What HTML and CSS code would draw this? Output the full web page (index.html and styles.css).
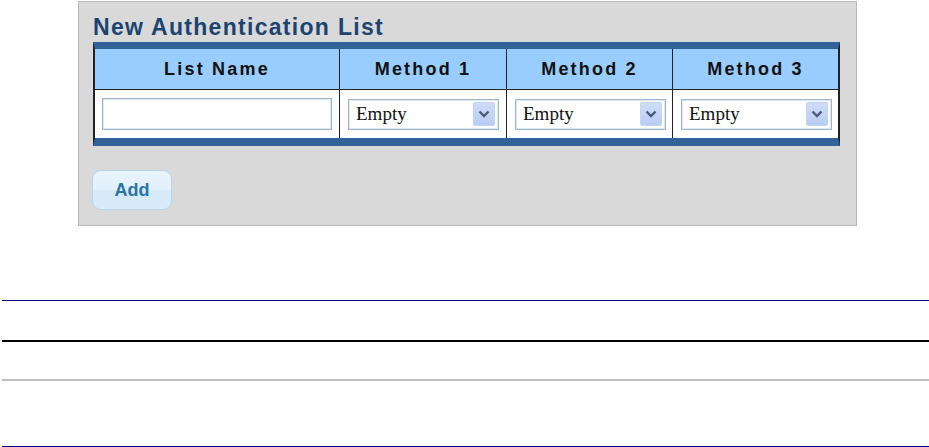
FILE: index.html
```html
<!DOCTYPE html>
<html>
<head>
<meta charset="utf-8">
<title>New Authentication List</title>
<link rel="stylesheet" href="styles.css">
</head>
<body>
<div class="panel">
  <h2 class="title">New Authentication List</h2>
  <table class="auth">
    <colgroup>
      <col class="col-name">
      <col class="col-m1">
      <col class="col-m2">
      <col class="col-m3">
    </colgroup>
    <thead>
      <tr>
        <th class="first">List Name</th>
        <th>Method 1</th>
        <th>Method 2</th>
        <th>Method 3</th>
      </tr>
    </thead>
    <tbody>
      <tr>
        <td class="first cell-name"><input class="name-input" type="text"></td>
        <td><div class="combo"><span class="combo-text">Empty</span><span class="combo-btn"><svg viewBox="0 0 12 8" width="12" height="8"><path d="M1.5 1.5 L6 6 L10.5 1.5" fill="none" stroke="#4b5a78" stroke-width="2.4"/></svg></span></div></td>
        <td><div class="combo"><span class="combo-text">Empty</span><span class="combo-btn"><svg viewBox="0 0 12 8" width="12" height="8"><path d="M1.5 1.5 L6 6 L10.5 1.5" fill="none" stroke="#4b5a78" stroke-width="2.4"/></svg></span></div></td>
        <td><div class="combo"><span class="combo-text">Empty</span><span class="combo-btn"><svg viewBox="0 0 12 8" width="12" height="8"><path d="M1.5 1.5 L6 6 L10.5 1.5" fill="none" stroke="#4b5a78" stroke-width="2.4"/></svg></span></div></td>
      </tr>
    </tbody>
  </table>
  <button class="btn-add" type="button">Add</button>
</div>
<div class="rules">
  <div class="rule rule-blue rule-1"></div>
  <div class="rule rule-black"></div>
  <div class="rule rule-gray"></div>
  <div class="rule rule-blue rule-4"></div>
</div>
</body>
</html>
```

FILE: styles.css
```css
html, body {
  margin: 0;
  padding: 0;
  background: #ffffff;
}

body {
  font-family: "Liberation Sans", Arial, sans-serif;
}

.panel {
  margin: 1px 0 0 78px;
  width: 747px;
  padding: 12px 16px 15px 14px;
  background: #d9d9d9;
  border: 1px solid #b8b8b8;
}

.title {
  margin: 0 0 1px 0;
  font-family: "Liberation Sans", Arial, sans-serif;
  font-size: 23px;
  line-height: 27px;
  font-weight: bold;
  letter-spacing: 1.3px;
  color: #1c4470;
}

.auth {
  box-sizing: border-box;
  width: 747px;
  border-collapse: separate;
  border-spacing: 0;
  table-layout: fixed;
  border-top: 7px solid #31639a;
  border-bottom: 8px solid #31639a;
  border-left: 2px solid #222222;
  border-right: 2px solid #222222;
  background: #ffffff;
}

.col-name { width: 244px; }
.col-m1 { width: 167px; }
.col-m2 { width: 166px; }
.col-m3 { width: 166px; }

.auth th {
  box-sizing: border-box;
  height: 41px;
  padding: 0;
  background: #99ccff;
  border-left: 1px solid #222222;
  border-bottom: 1px solid #222222;
  font-family: "Liberation Sans", Arial, sans-serif;
  font-size: 18px;
  font-weight: bold;
  letter-spacing: 2.2px;
  color: #111111;
  text-align: center;
  vertical-align: middle;
}

.auth td {
  box-sizing: border-box;
  height: 48px;
  padding: 0;
  border-left: 1px solid #222222;
  vertical-align: middle;
  background: #ffffff;
}

.auth th.first,
.auth td.first {
  border-left: none;
}

.auth td.cell-name {
  padding-left: 7px;
}

.name-input {
  display: block;
  box-sizing: border-box;
  width: 230px;
  height: 32px;
  margin: 0;
  border: 1px solid #9fb6cf;
  box-shadow: inset 0 0 0 1px #dfe7f0;
  background: #ffffff;
  outline: none;
}

.combo {
  box-sizing: border-box;
  display: flex;
  align-items: center;
  justify-content: space-between;
  width: 151px;
  height: 31px;
  margin-left: 8px;
  border: 1px solid #9fb6cf;
  box-shadow: inset 0 0 0 1px #dfe7f0;
  background: #ffffff;
  padding: 0 3px 0 7px;
}

.combo-text {
  font-family: "Liberation Serif", "Times New Roman", serif;
  font-size: 19px;
  color: #111111;
}

.combo-btn {
  box-sizing: border-box;
  width: 22px;
  height: 24px;
  display: flex;
  align-items: center;
  justify-content: center;
  background: linear-gradient(#cfdcf8, #b9cdf4);
  border: 1px solid #c2d3f3;
  border-radius: 2px;
}

.btn-add {
  display: block;
  box-sizing: border-box;
  width: 80px;
  height: 40px;
  margin: 24px 0 0 -1px;
  padding: 0;
  border: 1px solid #b3d5ee;
  border-radius: 9px;
  background: linear-gradient(#e9f4fc 0%, #e2f0fb 50%, #d5e9f8 52%, #d9ebf9 100%);
  font-family: "Liberation Sans", Arial, sans-serif;
  font-size: 18px;
  font-weight: bold;
  color: #2d74a8;
}

.rules {
  margin-left: 2px;
}

.rule {
  width: 927px;
}

.rule-1 {
  margin-top: 74px;
}

.rule-blue {
  border-top: 1px solid #000080;
}

.rule-black {
  margin-top: 39px;
  border-top: 2px solid #000000;
}

.rule-gray {
  margin-top: 37px;
  border-top: 2px solid #c0c0c0;
}

.rule-4 {
  margin-top: 65px;
}
```
